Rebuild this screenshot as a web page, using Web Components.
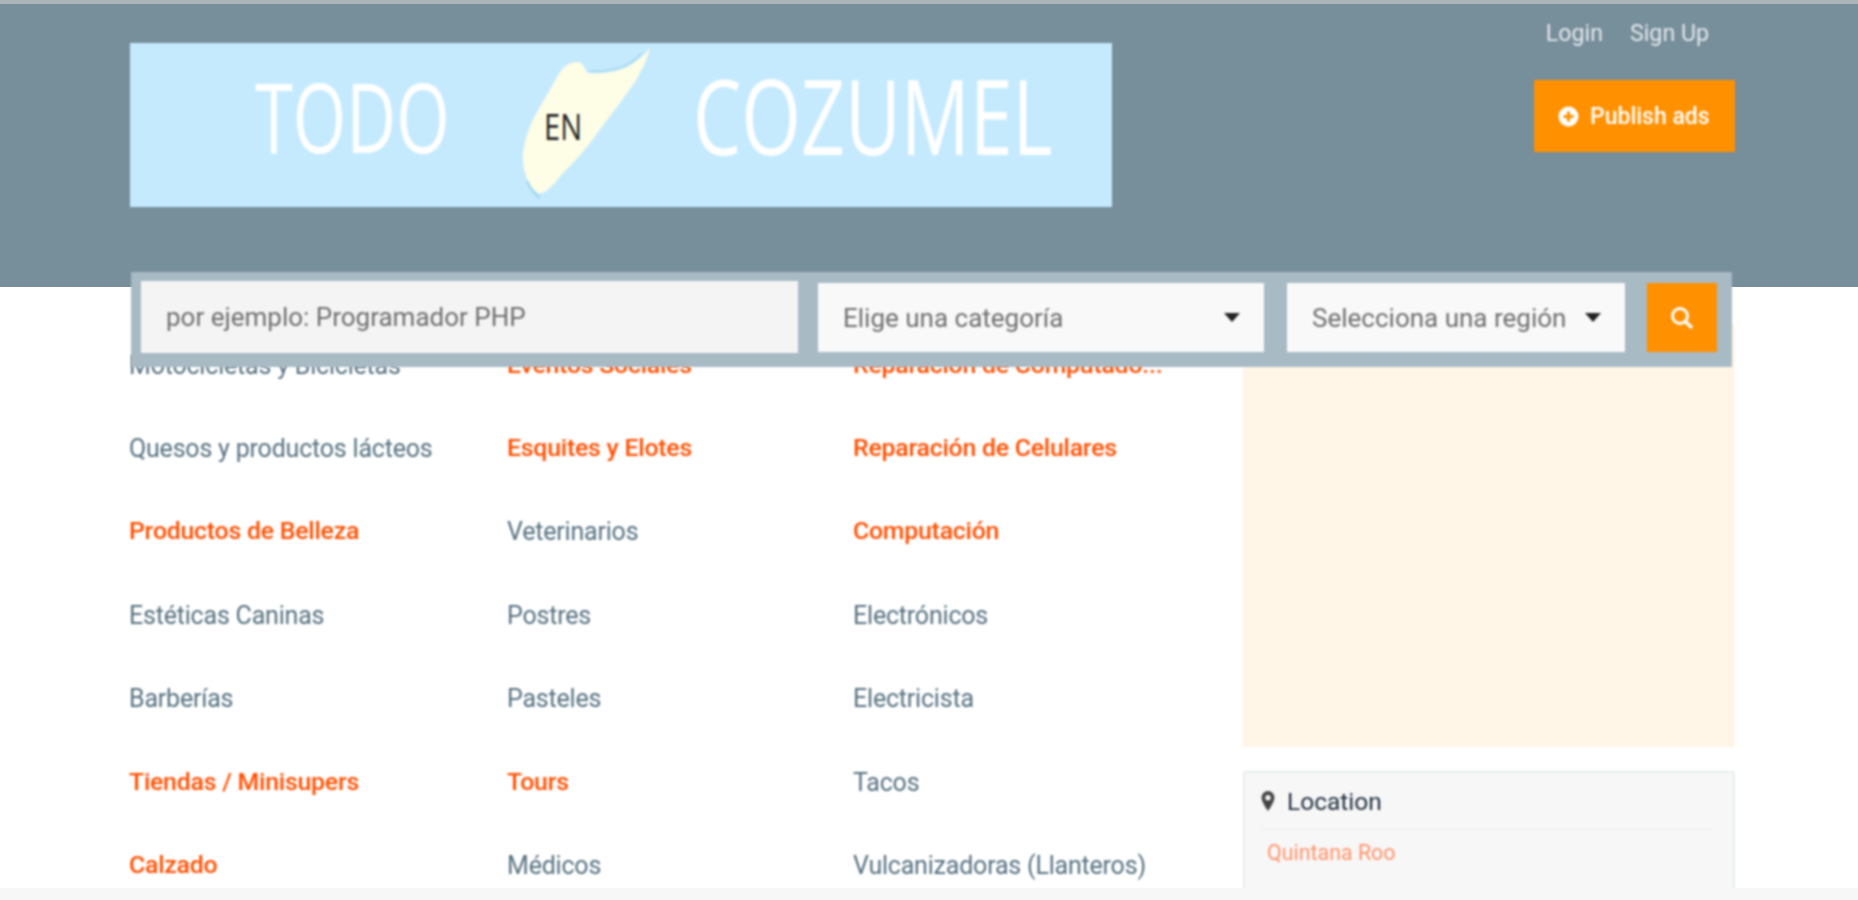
<!DOCTYPE html>
<html lang="es"><head><meta charset="utf-8"><title>Todo en Cozumel</title>
<style>html,body{margin:0;padding:0;height:100%;overflow:hidden;background:#fff}
body{font-family:Roboto,"Liberation Sans",sans-serif}</style></head>
<body>
<app-page>
  <site-header slot="header"></site-header>
  <search-bar slot="search"></search-bar>
  <category-grid slot="cats">
    <cat-link>Motocicletas y Bicicletas</cat-link><cat-link hot>Eventos Sociales</cat-link><cat-link hot>Reparación de Computado...</cat-link>
    <cat-link>Quesos y productos lácteos</cat-link><cat-link hot>Esquites y Elotes</cat-link><cat-link hot>Reparación de Celulares</cat-link>
    <cat-link hot>Productos de Belleza</cat-link><cat-link>Veterinarios</cat-link><cat-link hot>Computación</cat-link>
    <cat-link>Estéticas Caninas</cat-link><cat-link>Postres</cat-link><cat-link>Electrónicos</cat-link>
    <cat-link>Barberías</cat-link><cat-link>Pasteles</cat-link><cat-link>Electricista</cat-link>
    <cat-link hot>Tiendas / Minisupers</cat-link><cat-link hot>Tours</cat-link><cat-link>Tacos</cat-link>
    <cat-link hot>Calzado</cat-link><cat-link>Médicos</cat-link><cat-link>Vulcanizadoras (Llanteros)</cat-link>
  </category-grid>
  <side-bar slot="side"></side-bar>
</app-page>
<script>
function def(name, html){
  customElements.define(name, class extends HTMLElement{
    constructor(){super();this.attachShadow({mode:'open'}).innerHTML=html;}
  });
}
def('app-page',`<style>
:host{display:grid;grid-template-rows:888px 12px;height:900px;width:1858px;overflow:hidden;background:#f7f7f7}
.view{overflow:hidden;background:#fff}
.search{position:relative;z-index:2;margin:-15px 0 0 131px;width:1601px;filter:blur(.8px)}
.body{display:flex;margin:-43px 0 0 129px;width:1606px;justify-content:space-between;filter:blur(.8px)}
</style>
<div class="view"><slot name="header"></slot><div class="search"><slot name="search"></slot></div>
<div class="body"><slot name="cats"></slot><slot name="side"></slot></div></div><div></div>`);

def('site-logo',`<style>:host{display:block;width:982px;height:164px}svg{display:block}</style>
<svg width="982" height="164" viewBox="130 43 982 164" xmlns="http://www.w3.org/2000/svg">
<rect x="130" y="43" width="982" height="164" fill="#c5eafe"/>
<text transform="translate(255 153) scale(.709 1)" font-family="Open Sans" font-size="97" fill="#fff">TODO</text>
<text transform="translate(693 155) scale(.738 1)" font-family="Open Sans" font-size="104" fill="#fff">COZUMEL</text>
<path d="M650 48C647 52 641 58 635 62C630 66 625 68 620 70C609 73 598 74 587 73C585 68 583 63 578 62C570 62 564 66 560 72C552 86 544 100 537 112C530 124 525 138 523 153C522 166 526 180 532 188L538 193L543 193C552 187 558 180 563 173C572 164 580 156 587 147C594 138 600 129 607 120C614 111 621 102 627 93C632 86 637 80 640 73C645 64 648 56 650 48Z" fill="#fefde6"/>
<path d="M590 71C602 72 612 70 622 67C630 64 637 58 642 53" fill="none" stroke="#aadcf2" stroke-width="2"/>
<path d="M527 181C530 188 534 194 540 198" fill="none" stroke="#a3d8ee" stroke-width="2.500"/>
<text x="544" y="140" font-family="Open Sans" font-size="37" fill="#222" textLength="38" lengthAdjust="spacingAndGlyphs">EN</text>
</svg>`);

def('publish-button',`<style>:host{display:flex;align-items:center;box-sizing:border-box;width:201px;height:72px;background:#ff9000;color:#fff;font:500 23px Roboto,sans-serif;padding-left:24px;gap:11px}svg{display:block}</style>
<svg width="21" height="21" viewBox="0 0 21 21"><circle cx="10.5" cy="10.500" r="10" fill="#fff"/><path d="M10.500 5.500v10M5.500 10.500h10" stroke="#ff9000" stroke-width="3"/></svg><span>Publish ads</span>`);

def('site-header',`<style>:host{display:block;box-sizing:border-box;height:287px;background:#778e9b;border-top:4px solid #aeb5ba;padding:39px 123px 0 130px}
.row{display:flex;justify-content:space-between;align-items:flex-start;filter:blur(.8px)}
.acts{display:flex;flex-direction:column;align-items:flex-end;margin-top:-39px}
nav{display:flex;gap:27px;height:76px;align-items:flex-start;padding:15px 26px 0 0;box-sizing:border-box;font:400 23.2px/28px Roboto,sans-serif;color:#e4e9ec}
</style><div class="row"><site-logo></site-logo><div class="acts"><nav><span>Login</span><span>Sign Up</span></nav><publish-button></publish-button></div></div>`);

def('search-field',`<style>:host{display:flex;align-items:center;justify-content:space-between;box-sizing:border-box;height:69px;background:#f9f9f9;color:#6f6f6f;font:400 26px Roboto,sans-serif;padding:0 24px 0 25px;white-space:nowrap}
:host([plain]){background:#f4f4f4;height:72px;margin-top:-2px}</style>
<span><slot></slot></span><slot name="arrow"></slot>`);

def('search-bar',`<style>:host{display:flex;box-sizing:border-box;height:95px;background:#a8bac4;padding:11px 15px 15px 10px;align-items:flex-start}
.a{width:657px;margin-right:20px}.b{width:446px;margin-right:23px}.c{width:338px;margin-right:22px}
.go{width:70px;height:69px;background:#ff9000;display:flex;align-items:center;justify-content:center}
i{display:block;width:0;height:0;border:8px solid transparent;border-top:9px solid #222;border-bottom:0;flex:none}svg{display:block}</style>
<search-field plain class="a">por ejemplo: Programador PHP</search-field>
<search-field class="b">Elige una categoría<i slot="arrow"></i></search-field>
<search-field class="c">Selecciona una región<i slot="arrow"></i></search-field>
<div class="go"><svg width="24" height="24" viewBox="0 0 24 24"><circle cx="10" cy="10" r="7.500" fill="none" stroke="#fff" stroke-width="3"/><path d="M15.500 15.500l6.500 6.500" stroke="#fff" stroke-width="3.400"/></svg></div>`);

def('category-grid',`<style>:host{display:grid;grid-template-columns:378px 346px 390px;grid-auto-rows:83.4px;height:600px}</style><slot></slot>`);
def('cat-link',`<style>:host{display:flex;align-items:center;font:400 25px/30px Roboto,sans-serif;color:#567180;white-space:nowrap;letter-spacing:-.2px}
:host([hot]){color:#ff4f00;font-weight:500;font-size:24.800px;padding-bottom:2px}</style><slot></slot>`);

def('location-box',`<style>:host{display:block;box-sizing:border-box;height:140px;background:#f7f7f7;border:2px solid #e9eded;border-radius:2px;padding:13px 20px 0 16px}
h3{margin:0;display:flex;align-items:center;gap:12px;height:30px;font:400 24.500px Roboto,sans-serif;color:#1f2f40}
.l{height:0;border-top:1px solid #eeeeee;margin:13px 0 0 0}
.q{font:400 21.400px/24px Roboto,sans-serif;color:#ff936a;padding:11px 0 13px 6px;}svg{display:block}</style>
<h3><svg width="14" height="22" viewBox="0 0 14 22"><path fill-rule="evenodd" d="M7 1a6.500 6.500 0 0 0-6.500 6.500C.5 12 7 21 7 21s6.500-9 6.500-13.500A6.500 6.500 0 0 0 7 1zm0 4a2.700 2.700 0 1 1 0 5.400A2.700 2.700 0 0 1 7 5z" fill="#444"/></svg><span>Location</span></h3>
<div class="l"></div><div class="q">Quintana Roo</div><div class="l"></div>`);

def('side-bar',`<style>:host{display:block;width:492px}.ad{height:423px;background:#fff6e8;margin-bottom:24px}</style>
<div class="ad"></div><location-box></location-box>`);
</script>
</body></html>
